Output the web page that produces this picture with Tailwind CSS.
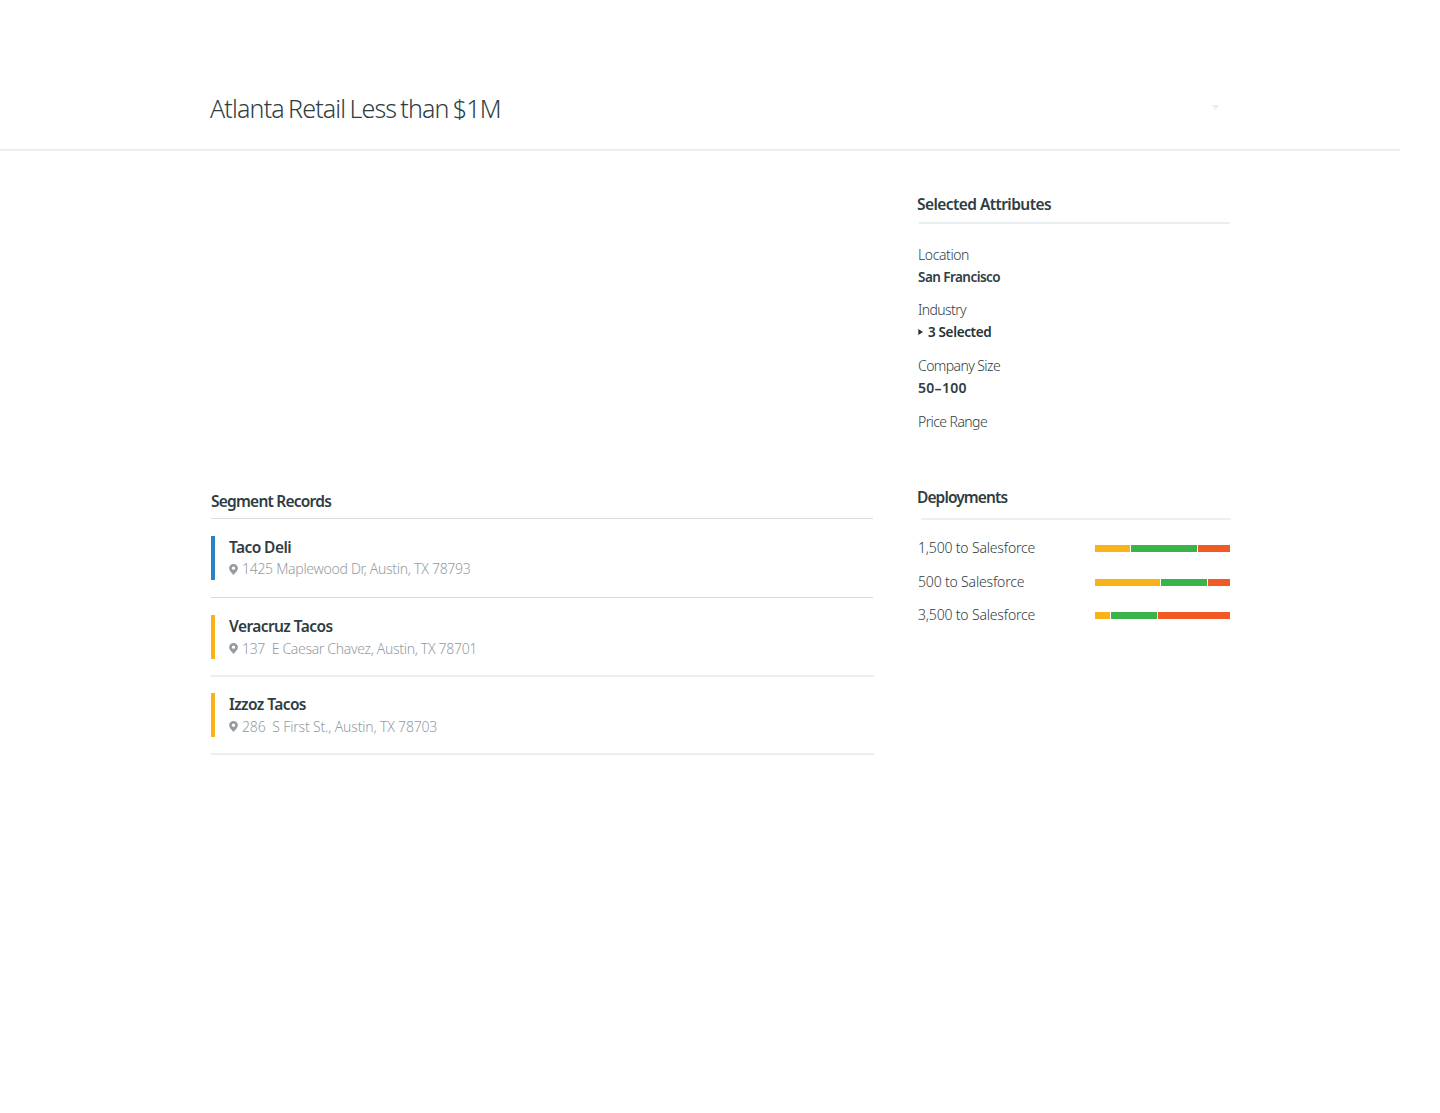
<!DOCTYPE html>
<html lang="en">
<head>
<meta charset="utf-8">
<title>Atlanta Retail Less than $1M</title>
<script src="https://cdn.jsdelivr.net/npm/@tailwindcss/browser@4"></script>
</head>
<body class="min-h-screen w-full bg-white font-['Noto_Sans',sans-serif] text-[#2f3d43]">
<svg class="hidden"><symbol id="pin" viewBox="0 0 9 12" preserveAspectRatio="none"><path fill-rule="evenodd" d="M4.5 0.1A4.4 4.6 0 0 0 0.1 4.7C0.1 7.4 2.6 9.5 4.5 12C6.4 9.5 8.9 7.4 8.9 4.7A4.4 4.6 0 0 0 4.5 0.1ZM4.5 2.7A1.7 1.8 0 1 1 4.5 6.3A1.7 1.8 0 0 1 4.5 2.7Z"/></symbol></svg>
<header class="flex h-[151px] w-[1400px] items-start justify-between border-b-2 border-[#e9eef1] pt-[92px] pr-[181px] pl-[210px]">
  <h1 class="text-[25px] leading-8 font-light tracking-[-0.83px] [word-spacing:-1.6px]">Atlanta Retail Less than $1M</h1>
  <svg class="mt-[13px] h-[5px] w-[7px] fill-[#e9eef1]" viewBox="0 0 7 5"><path d="M0 0H7L3.5 5Z"/></svg>
</header>
<main class="flex gap-[43px] pl-[211px]">
  <section class="w-[663px] pt-[338px]">
    <h2 class="mr-px h-[30px] border-b border-[#dadcdd] text-[15.5px] leading-6 font-semibold tracking-[-0.77px]">Segment Records</h2>
    <ul>
      <li class="mr-px flex h-[79px] border-b border-[#d5dbdf] pt-[17px]">
        <span class="h-11 w-1 bg-[#2c83c4]"></span>
        <div class="pl-3.5">
          <h3 class="-mt-px text-[15.5px] leading-6 font-semibold tracking-[-0.58px]">Taco Deli</h3>
          <p class="flex text-sm leading-5 font-light text-[#949ca3]"><svg class="mt-[5px] mr-1 h-[11px] w-[9px] fill-[#949ca3]"><use href="#pin"/></svg><span class="tracking-[-0.29px]">1425 Maplewood Dr, Austin, TX 78793</span></p>
        </div>
      </li>
      <li class="flex h-[79px] border-b-2 border-[#ededee] pt-[17px]">
        <span class="h-11 w-1 bg-[#f9b218]"></span>
        <div class="pl-3.5">
          <h3 class="-mt-px text-[15.5px] leading-6 font-semibold tracking-[-0.58px]">Veracruz Tacos</h3>
          <p class="flex text-sm leading-[22px] font-light text-[#949ca3]"><svg class="mt-[5px] mr-1 h-[11px] w-[9px] fill-[#949ca3]"><use href="#pin"/></svg><span class="tracking-[-0.32px] whitespace-pre">137  E Caesar Chavez, Austin, TX 78701</span></p>
        </div>
      </li>
      <li class="flex h-[78px] border-b-2 border-[#ededee] pt-4">
        <span class="h-11 w-1 bg-[#f9b218]"></span>
        <div class="pl-3.5">
          <h3 class="-mt-px text-[15.5px] leading-6 font-semibold tracking-[-0.58px]">Izzoz Tacos</h3>
          <p class="flex text-sm leading-[22px] font-light text-[#949ca3]"><svg class="mt-[5px] mr-1 h-[11px] w-[9px] fill-[#949ca3]"><use href="#pin"/></svg><span class="tracking-[-0.18px] whitespace-pre">286  S First St., Austin, TX 78703</span></p>
        </div>
      </li>
    </ul>
  </section>
  <aside class="w-[314px] pt-[41px]">
    <section class="h-[293px]">
      <h2 class="h-[30px] text-[15.5px] leading-6 font-semibold tracking-[-0.56px]">Selected Attributes</h2>
      <div class="ml-0.5 h-0.5 w-[311px] bg-[#e9eef1]"></div>
      <dl class="pt-[21px] pl-px text-sm leading-5">
        <div class="h-[55px]">
          <dt class="h-[22px] font-light tracking-[-0.4px]">Location</dt>
          <dd class="text-[13.5px] font-semibold tracking-[-0.55px]">San Francisco</dd>
        </div>
        <div class="h-14">
          <dt class="h-[22px] font-light tracking-[-0.6px]">Industry</dt>
          <dd class="flex text-[13.5px] font-semibold tracking-[-0.35px] text-[#263238]"><svg class="mt-[7px] mr-[5px] h-[6px] w-[5px] fill-[#263238]" viewBox="0 0 5 6"><path d="M0.3 0L5 3L0.3 6Z"/></svg>3 Selected</dd>
        </div>
        <div class="h-14">
          <dt class="h-[22px] font-light tracking-[-0.58px]">Company Size</dt>
          <dd class="font-semibold tracking-[0.3px]">50–100</dd>
        </div>
        <div>
          <dt class="font-light tracking-[-0.58px]">Price Range</dt>
        </div>
      </dl>
    </section>
    <section>
      <h2 class="h-[33px] text-[15.5px] leading-6 font-semibold tracking-[-0.9px]">Deployments</h2>
      <div class="ml-1 h-0.5 w-[310px] bg-[#efefef]"></div>
      <ul class="mr-px pt-[18px] pl-px text-sm leading-5 font-light tracking-[-0.17px]">
        <li class="flex h-[34px] justify-between"><span>1,500 to Salesforce</span><span class="mt-[7px] flex h-[7px] w-[135px] gap-px"><i class="w-[35px] bg-[#f9b218]"></i><i class="w-[66px] bg-[#38b44a]"></i><i class="w-8 bg-[#f15a24]"></i></span></li>
        <li class="flex h-[33px] justify-between"><span>500 to Salesforce</span><span class="mt-[7px] flex h-[7px] w-[135px] gap-px"><i class="w-[65px] bg-[#f9b218]"></i><i class="w-[46px] bg-[#38b44a]"></i><i class="w-[22px] bg-[#f15a24]"></i></span></li>
        <li class="flex justify-between"><span>3,500 to Salesforce</span><span class="mt-[7px] flex h-[7px] w-[135px] gap-px"><i class="w-[15px] bg-[#f9b218]"></i><i class="w-[46px] bg-[#38b44a]"></i><i class="w-[72px] bg-[#f15a24]"></i></span></li>
      </ul>
    </section>
  </aside>
</main>
</body>
</html>
